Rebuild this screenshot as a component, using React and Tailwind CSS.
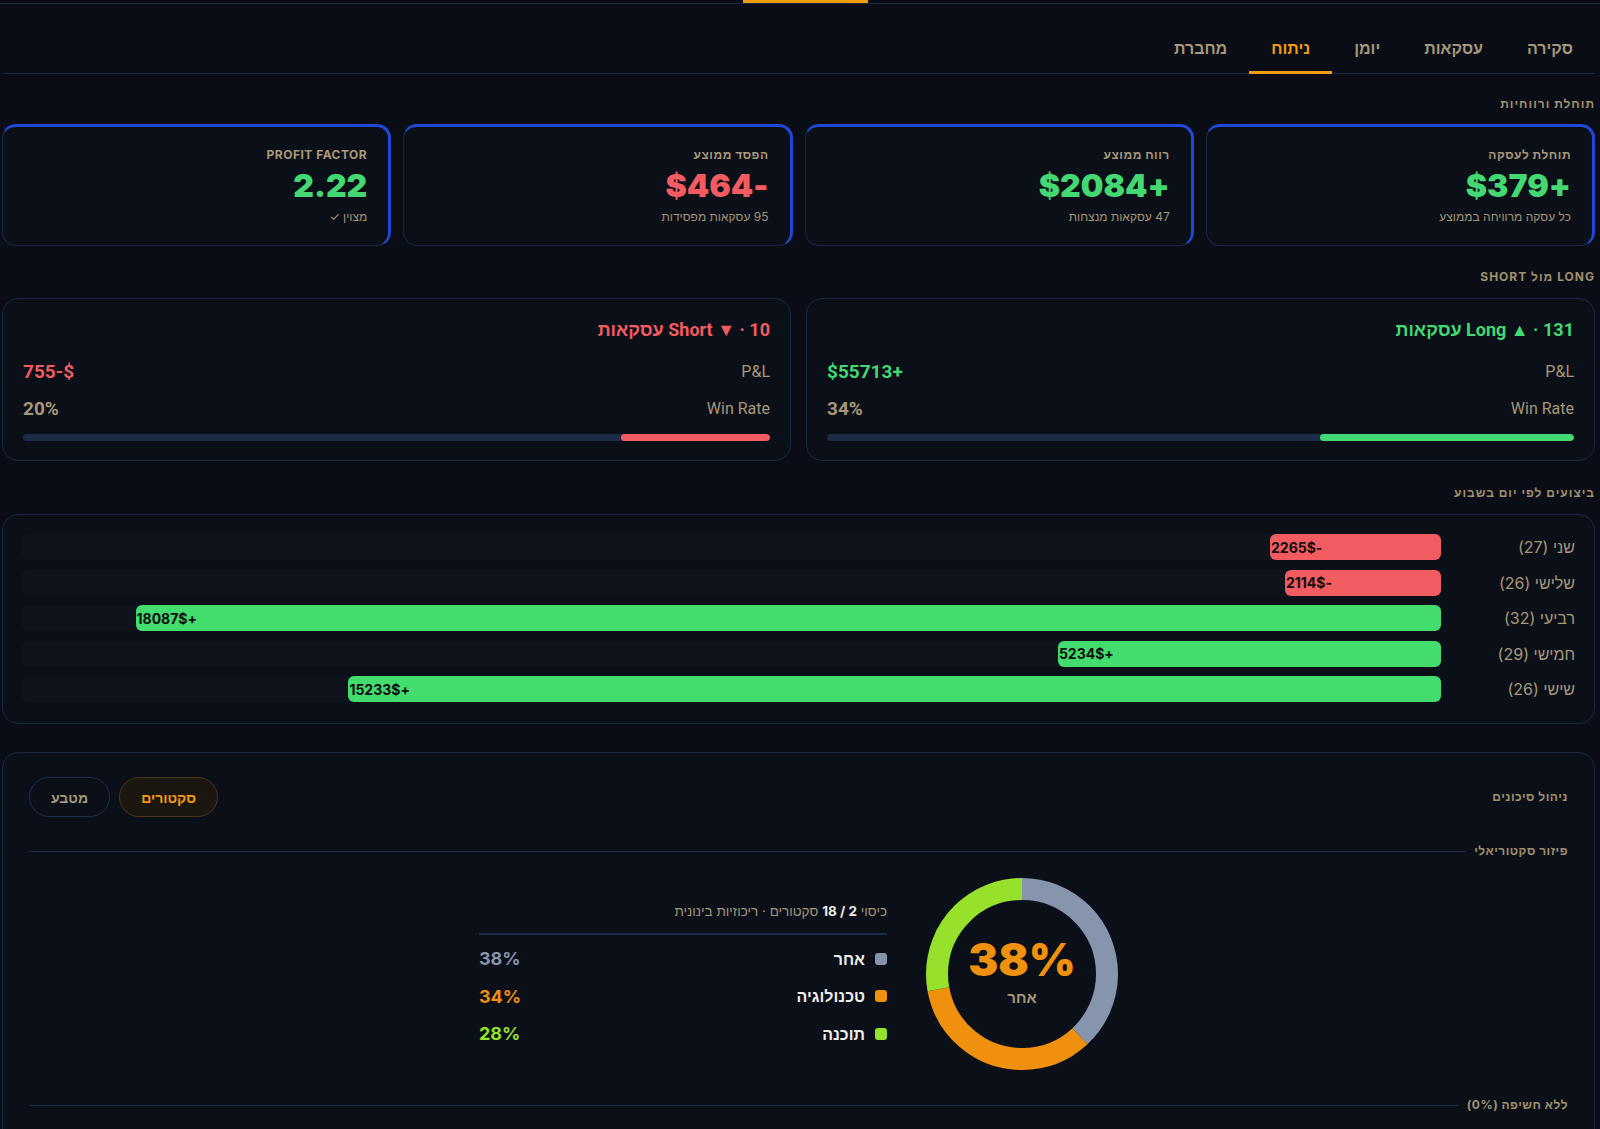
const TAN = 'text-[#a89878]'

const TABS = ['סקירה', 'עסקאות', 'יומן', 'ניתוח', 'מחברת']

const STATS = [
  { label: 'תוחלת לעסקה', value: '+$379', tone: 'text-[#44d873]', sub: 'כל עסקה מרוויחה בממוצע' },
  { label: 'רווח ממוצע', value: '+$2084', tone: 'text-[#44d873]', sub: '47 עסקאות מנצחות' },
  { label: 'הפסד ממוצע', value: '-$464', tone: 'text-[#f25b60]', sub: '95 עסקאות מפסידות' },
  { label: 'PROFIT FACTOR', value: '2.22', tone: 'text-[#44d873]', sub: 'מצוין ✓' },
]

// width = share of the track, as drawn
const DAYS = [
  { label: 'שני (27)', loss: true, text: '-2265$', width: 12.05 },
  { label: 'שלישי (26)', loss: true, text: '-2114$', width: 11 },
  { label: 'רביעי (32)', loss: false, text: '+18087$', width: 92 },
  { label: 'חמישי (29)', loss: false, text: '+5234$', width: 27 },
  { label: 'שישי (26)', loss: false, text: '+15233$', width: 77 },
]

const SECTORS = [
  { name: 'אחר', pct: 38, color: '#8794ae', text: 'text-[#8794ae]' },
  { name: 'טכנולוגיה', pct: 34, color: '#f0900f', text: 'text-[#f0900f]' },
  { name: 'תוכנה', pct: 28, color: '#95e12b', text: 'text-[#95e12b]' },
]

function SectionTitle({ children, className = '' }) {
  return (
    <div className={`text-[12px] leading-4 font-bold tracking-[1px] text-[#a0916f] ${className}`}>
      {children}
    </div>
  )
}

function StatCard({ label, value, tone, sub }) {
  return (
    <div className="rounded-[14px] bg-[#0b0f18] border border-[#1a2840] border-t-[3px] border-r-[3px] border-t-[#1f48d8] border-r-[#1f48d8] pr-[21px] pl-5 pt-5 pb-5 text-right">
      <div className={`text-[12px] leading-4 font-bold tracking-[0.5px] ${TAN}`}>{label}</div>
      <div className={`mt-[7px] text-[32px] leading-[32px] font-black ${tone}`}>{value}</div>
      <div className="mt-[7px] text-[12px] leading-4 text-[#a39676]">{sub}</div>
    </div>
  )
}

function SideCard({ title, tone, pnl, winRate, barColor }) {
  return (
    <div className="rounded-2xl bg-[#0b0f18] border border-[#1a2840] px-5 pt-[18px] pb-[19px] font-['Roboto','Liberation_Sans',sans-serif]">
      <div className={`text-[18px] leading-[26px] font-bold ${tone}`}>{title}</div>
      <div className="mt-[15px] flex items-center justify-between h-7">
        <span className={`text-[16px] ${TAN}`}>P&amp;L</span>
        <span className={`text-[19px] font-bold ${tone}`}>{pnl}</span>
      </div>
      <div className="mt-[9px] flex items-center justify-between h-7">
        <span className={`text-[16px] ${TAN}`}>Win Rate</span>
        <span className={`text-[19px] font-bold ${TAN}`}>{winRate}%</span>
      </div>
      <div className="mt-[11px] h-[7px] rounded-full bg-[#1c2a48] overflow-hidden flex">
        <div className={`h-full rounded-full ${barColor}`} style={{ width: `${winRate}%` }} />
      </div>
    </div>
  )
}

function Donut() {
  const r = 85
  const c = 2 * Math.PI * r
  let acc = 0
  return (
    <div className="relative w-[192px] h-[192px] shrink-0">
      <svg width="192" height="192" viewBox="0 0 192 192" className="-rotate-90">
        {SECTORS.map((s) => {
          const el = (
            <circle
              key={s.name}
              cx="96"
              cy="96"
              r={r}
              fill="none"
              stroke={s.color}
              strokeWidth="22"
              strokeDasharray={`${(s.pct / 100) * c} ${c}`}
              strokeDashoffset={-acc * c}
            />
          )
          acc += s.pct / 100
          return el
        })}
      </svg>
      <div className="absolute inset-0 flex flex-col items-center justify-center">
        <div className="text-[45px] leading-[46px] font-black text-[#f0900f] mt-[-2px]">38%</div>
        <div className={`mt-[4px] text-[15px] font-bold ${TAN}`}>אחר</div>
      </div>
    </div>
  )
}

function Divider({ children, className = '' }) {
  return (
    <div className={`flex items-center gap-2 ${className}`}>
      <span className="text-[12px] leading-4 font-bold tracking-[0.5px] text-[#a0916f] whitespace-nowrap">{children}</span>
      <div className="flex-1 h-px bg-[#1a2a44]" />
    </div>
  )
}

export default function App() {
  return (
    <div dir="rtl" className="min-h-screen bg-[#0a0d15] font-['Inter','Liberation_Sans',sans-serif] overflow-hidden">
      <div dir="ltr" className="h-[4px] border-b border-[#1c2740]">
        <div className="ml-[743px] w-[125px] h-[3px] bg-[#f39c12]" />
      </div>

      <div className="pl-[2px] pr-[5px] pb-10">
        {/* tabs */}
        <div className="flex pt-8 border-b border-[#1c2740]">
          {TABS.map((t) => (
            <div
              key={t}
              className={`px-[22px] pb-[11px] text-[16px] leading-6 font-bold border-b-[3px] -mb-px ${
                t === 'ניתוח' ? 'text-[#f39c12] border-[#f39c12]' : 'text-[#a4977a] border-transparent'
              }`}
            >
              {t}
            </div>
          ))}
        </div>

        <SectionTitle className="mt-[22px]">תוחלת ורווחיות</SectionTitle>
        <div className="mt-3 grid grid-cols-4 gap-3">
          {STATS.map((s) => (
            <StatCard key={s.label} {...s} />
          ))}
        </div>

        <SectionTitle className="mt-[23px]">LONG מול SHORT</SectionTitle>
        <div className="mt-[13px] grid grid-cols-2 gap-[15px]">
          <SideCard title="Long ▲ · 131 עסקאות" tone="text-[#44d873]" pnl="+$55713" winRate={34} barColor="bg-[#44d873]" />
          <SideCard title="Short ▼ · 10 עסקאות" tone="text-[#f25b60]" pnl="$-755" winRate={20} barColor="bg-[#f25b60]" />
        </div>

        <SectionTitle className="mt-6">ביצועים לפי יום בשבוע</SectionTitle>
        <div className="mt-[13px] rounded-2xl bg-[#0b0f18] border border-[#1a2840] px-[19px] pt-[19px] pb-[21px] flex flex-col gap-[9.5px]">
          {DAYS.map((d) => (
            <div key={d.label} className="flex items-center h-[26px]">
              <div className={`w-[134px] shrink-0 text-[16px] ${TAN}`}>{d.label}</div>
              <div className="flex-1 h-full rounded-md bg-[#0f131c] flex">
                <div
                  className={`h-full rounded-md flex items-center justify-end pl-px ${d.loss ? 'bg-[#f25b60]' : 'bg-[#42dc6f]'}`}
                  style={{ width: `${d.width}%` }}
                >
                  <span className="text-[14px] font-bold text-[#0d0d0d]">{d.text}</span>
                </div>
              </div>
            </div>
          ))}
        </div>

        {/* risk */}
        <div className="mt-[28px] rounded-2xl bg-[#0b0f18] border border-[#1a2840] px-[26px] pt-6 pb-10">
          <div className="flex items-center justify-between">
            <div className="text-[12px] font-bold tracking-[0.5px] text-[#a0916f]">ניהול סיכונים</div>
            <div className="flex gap-[9px]">
              <button className="h-[40px] px-[21px] rounded-full bg-[#1b1710] border border-[#4a3518] text-[14px] font-bold text-[#f39c12]">
                סקטורים
              </button>
              <button className="h-[40px] px-[21px] rounded-full bg-[#0b0f18] border border-[#1d3050] text-[14px] font-bold text-[#a4977a]">
                מטבע
              </button>
            </div>
          </div>

          <Divider className="mt-[26px]">פיזור סקטוריאלי</Divider>

          <div className="mt-[19px] flex items-start justify-center gap-[39px]">
            <Donut />
            <div className="w-[408px] mt-[23px]">
              <div className="text-[13.5px] leading-5 text-[#a39676] pb-3 border-b-2 border-[#1c2c48]">
                כיסוי <span className="font-bold text-[#ecebe7]">2 / 18</span> סקטורים · ריכוזיות בינונית
              </div>
              <div className="mt-[5px] flex flex-col">
                {SECTORS.map((s) => (
                  <div key={s.name} className="flex items-center justify-between h-[37.5px]">
                    <div className="flex items-center gap-[10px]">
                      <span className="w-3 h-3 rounded-[3px]" style={{ backgroundColor: s.color }} />
                      <span className="text-[16px] font-bold text-[#ecebe7]">{s.name}</span>
                    </div>
                    <span className={`text-[18px] font-bold ${s.text}`}>{s.pct}%</span>
                  </div>
                ))}
              </div>
            </div>
          </div>

          <Divider className="mt-[27px]">ללא חשיפה (0%)</Divider>
        </div>
      </div>
    </div>
  )
}
